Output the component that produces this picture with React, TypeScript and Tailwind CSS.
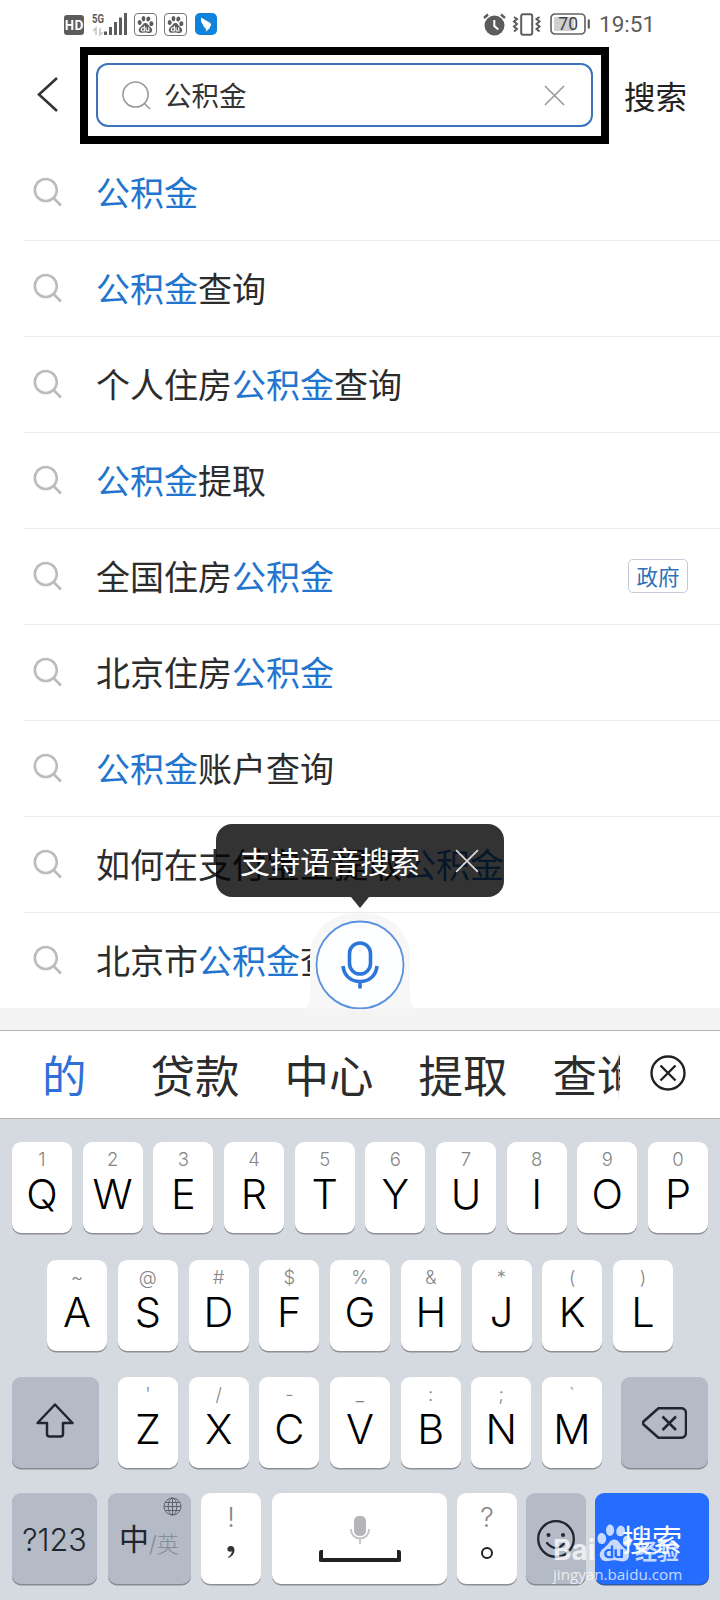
import type { ReactNode } from "react";
import clsx from "clsx";
import { SiBaidu } from "react-icons/si";

const KEYWORD = "公积金";

const suggestions: { text: string; tag?: string }[] = [
  { text: "公积金" },
  { text: "公积金查询" },
  { text: "个人住房公积金查询" },
  { text: "公积金提取" },
  { text: "全国住房公积金", tag: "政府" },
  { text: "北京住房公积金" },
  { text: "公积金账户查询" },
  { text: "如何在支付宝上提取公积金" },
  { text: "北京市公积金查询" },
];

const topRow = ["Q1", "W2", "E3", "R4", "T5", "Y6", "U7", "I8", "O9", "P0"];
const middleRow = ["A~", "S@", "D#", "F$", "G%", "H&", "J*", "K(", "L)"];
const bottomRow = ["Z'", "X/", "C-", "V_", "B:", "N;", "M`"];

function SearchIcon({ className, thin }: { className: string; thin?: boolean }) {
  return (
    <svg
      className={className}
      viewBox="0 0 30 30"
      fill="none"
      stroke="currentColor"
      strokeWidth={thin ? 1.6 : 2.6}
    >
      <circle cx={thin ? 14 : 12.8} cy={thin ? 14 : 13} r={thin ? 13 : 11} />
      <path d={thin ? "M23 23l6 6" : "M20.5 21l7.500 7.500"} />
    </svg>
  );
}

function Cross({ className }: { className: string }) {
  return (
    <svg className={className} viewBox="0 0 22 22" fill="none" stroke="currentColor" strokeWidth="1.6">
      <path d="M1 1l20 20M21 1L1 21" />
    </svg>
  );
}

function StatusBar() {
  return (
    <div className="flex h-[47px] items-center pl-16 pr-[66px] text-[#5c5c5c]">
      <div className="mt-[2px] flex h-5 w-5 items-center justify-center rounded-[3px] bg-[#5c5c5c] text-[13px] font-bold text-white">
        HD
      </div>
      <svg className="ml-[7px] mt-px h-6 w-9 overflow-visible" viewBox="0 0 36 24" fill="currentColor">
        <text x="1" y="10.500" fontSize="13" fontWeight="700" textLength="12" lengthAdjust="spacingAndGlyphs" fontFamily="Roboto">
          5G
        </text>
        <path d="M5 23v-7l-3 3M9 16v7l3-3" fill="none" stroke="#c4c4c4" strokeWidth="1.500" />
        <path d="M13 19.500h3V23h-3zM18 15h3v8h-3zM23 10h3v13h-3zM28 5.500h3V23h-3zM33 1h3v22h-3z" />
      </svg>
      {[0, 1].map((i) => (
        <div
          key={i}
          className="ml-[7px] mt-px flex size-[23px] items-center justify-center rounded border border-[#777777]"
        >
          <SiBaidu className="size-[17px]" />
        </div>
      ))}
      <svg className="ml-2 mt-px size-[22px]" viewBox="0 0 22 22">
        <rect width="22" height="22" rx="5" fill="#0f82dc" />
        <path d="M6 4.500l8.500 5c1.700 1 2 2 1.300 3.300l-1.300 2h.8l-4.600 4 .4-3-1.800-.8.600-.8-2.100-1.500.7-.5C6.600 10.500 5.500 8 6 4.500z" fill="#fff" />
      </svg>

      <svg className="ml-auto mt-px size-[23px]" viewBox="0 0 23 23" fill="none" stroke="currentColor">
        <circle cx="11.500" cy="12.500" r="10" fill="currentColor" stroke="none" />
        <path d="M1 5l4-3.500M22 5l-4-3.500" strokeWidth="2.400" />
        <path d="M11.300 7v6l4 3.500" stroke="#fff" strokeWidth="2" />
      </svg>
      <svg className="ml-[6px] mt-px h-[23px] w-[30px]" viewBox="0 0 30 23" fill="none" stroke="currentColor">
        <rect x="9.200" y="1.200" width="11" height="20.500" rx="2" strokeWidth="2" />
        <path d="M2 4l3 2-3 2.500L5 11l-3 2.500L5 16l-3 2.500M27.500 4l-3 2 3 2.500-3 2.500 3 2.500-3 2.500 3 2.500" strokeWidth="2" />
      </svg>
      <svg className="ml-2 mt-px h-[22px] w-[41px]" viewBox="0 0 41 22" fill="none">
        <rect x="1" y="1" width="34" height="20" rx="4" stroke="#666" strokeWidth="1.700" />
        <rect x="4" y="4" width="20" height="14" rx="1" fill="#cfcfcf" />
        <path d="M38.800 6.500v9" stroke="#5c5c5c" strokeWidth="2.200" />
        <text x="18.200" y="16.800" textAnchor="middle" fontSize="17.500" fontFamily="Roboto" fill="#444">
          70
        </text>
      </svg>
      <span className="ml-2 mt-[2px] w-[55px] font-[Roboto] text-[22.500px] leading-none">19:51</span>
    </div>
  );
}

function SearchHeader() {
  return (
    <header className="flex h-[98px] items-center">
      <svg className="-mt-1 ml-[37px] h-[35px] w-[21px]" viewBox="0 0 21 35" fill="none" stroke="#333" strokeWidth="2.600">
        <path d="M20 1L2 17.500 20 34" />
      </svg>
      <div className="-mt-px ml-[22px] h-[97px] w-[529px] border-8 border-black px-2 py-[8px]">
        <div className="flex h-16 items-center rounded-xl border-2 border-[#3b74bd] pl-6 pr-[26px]">
          <SearchIcon className="size-[29px] text-[#999999]" thin />
          <span className="ml-[13px] text-[27.500px] leading-none text-[#333333]">{KEYWORD}</span>
          <Cross className="ml-auto size-[21px] text-[#999999]" />
        </div>
      </div>
      <span className="-mt-px ml-[15px] text-[31.500px] leading-none text-[#222222]">搜索</span>
    </header>
  );
}

function SuggestionRow({ text, tag }: { text: string; tag?: string }) {
  const [before, after] = text.split(KEYWORD);
  return (
    <li className="ml-6 flex h-24 items-center border-b border-[#ebebeb] pb-[2px] pr-8 last:h-[95px] last:border-b-0">
      <SearchIcon className="ml-[9px] size-[30px] text-[#bcbcbc]" />
      <span className="ml-[33px] whitespace-nowrap text-[34px] leading-none text-[#2c2c2c]">
        {before}
        <span className="text-[#2275cf]">{KEYWORD}</span>
        {after}
      </span>
      {tag && (
        <span className="ml-auto flex h-[34px] w-[60px] items-center justify-center rounded-[5px] border border-[#c3cbd8] text-[21.500px] leading-none text-[#2f72b8]">
          {tag}
        </span>
      )}
    </li>
  );
}

function VoicePrompt() {
  return (
    <>
      <svg className="absolute left-[304px] top-[908px] h-[101px] w-28" viewBox="0 0 112 101">
        <path d="M0 101C7 99 6 87 6 64V44C10 18 30 5 56 5s46 13 50 39v20c0 23 0 35 6 37z" fill="#f7f7f7" />
        <circle cx="56" cy="57" r="43.500" fill="#fdfeff" stroke="#5b92de" strokeWidth="1.800" />
        <g fill="none" stroke="#2c76d9" strokeWidth="3.600">
          <rect x="45.500" y="35" width="21" height="31" rx="10.500" />
          <path d="M39 58c1 10 8 15.500 17 15.500S72 68 73 58M56 73v7.500" />
        </g>
      </svg>
      <div className="absolute left-[216px] top-[824px] flex h-[73px] w-72 items-center rounded-2xl bg-black/80 pl-6 pr-[25px]">
        <span className="-mt-[2px] text-[30px] leading-none text-white">支持语音搜索</span>
        <Cross className="ml-auto size-6 text-[#d8d8d8]" />
        <svg className="absolute left-[135px] top-[73px] h-[11px] w-[18px]" viewBox="0 0 18 11">
          <path d="M0 0h18l-9 11z" fill="#333" />
        </svg>
      </div>
    </>
  );
}

function CandidateBar() {
  return (
    <div className="flex h-[89px] items-center border-y border-[#b4b4b4] bg-white">
      <div className="flex w-[620px] overflow-hidden whitespace-nowrap pb-px pl-[42px] text-[44.500px] leading-[80px] text-[#2c2c2c]">
        <span className="mr-16 text-[#2f6fd8]">的</span>
        {["贷款", "中心", "提取", "查询"].map((word) => (
          <span key={word} className="mr-[45px]">
            {word}
          </span>
        ))}
      </div>
      <div className="-ml-[2px] h-[52px] w-px bg-linear-to-b from-transparent via-[#999999] to-transparent" />
      <svg className="-mt-[3px] ml-[31px] size-9" viewBox="0 0 36 36" fill="none" stroke="#222" strokeWidth="2.400">
        <circle cx="18" cy="18" r="16.500" />
        <path d="M10.500 10.500l15 15M25.500 10.500l-15 15" />
      </svg>
    </div>
  );
}

function Key({ className, dark, children }: { className: string; dark?: boolean; children: ReactNode }) {
  return (
    <div
      className={clsx(
        "relative h-[91px] shrink-0 rounded-[9px]",
        dark ? "bg-[#b4bac6] shadow-[0_1.500px_0_#858992]" : "bg-white shadow-[0_1.500px_0_#8d8f94]",
        className,
      )}
    >
      {children}
    </div>
  );
}

function LetterKey({ label }: { label: string }) {
  return (
    <Key className="flex w-[60px] flex-col items-center pt-[5px]">
      <span className="text-[18.500px] font-light leading-6 text-[#858585]">{label[1]}</span>
      <span className="mt-px text-[41.500px] font-light leading-[45px] text-black">{label[0]}</span>
    </Key>
  );
}

function Keyboard() {
  return (
    <div className="flex h-[481px] flex-col bg-[#d5d9e0] px-3 pt-[23px] font-[Inter,'Noto_Sans_CJK_SC',sans-serif]">
      <div className="flex justify-between">
        {topRow.map((k) => (
          <LetterKey key={k} label={k} />
        ))}
      </div>
      <div className="mt-[27px] flex justify-between px-[35px]">
        {middleRow.map((k) => (
          <LetterKey key={k} label={k} />
        ))}
      </div>
      <div className="mt-[26px] flex justify-between">
        <Key dark className="flex w-[87px] items-center justify-center">
          <svg className="-ml-px -mt-1 h-[35px] w-[38px]" viewBox="0 0 38 35" fill="none" stroke="#20262e" strokeWidth="2.500" strokeLinejoin="round">
            <path d="M19 1.500L36.500 20H27v11a2.500 2.500 0 0 1-2.500 2.500h-11A2.500 2.500 0 0 1 11 31V20H1.500z" />
          </svg>
        </Key>
        <div className="flex w-[484px] justify-between">
          {bottomRow.map((k) => (
            <LetterKey key={k} label={k} />
          ))}
        </div>
        <Key dark className="flex w-[87px] items-center justify-center">
          <svg className="h-8 w-[45px]" viewBox="0 0 45 32" fill="none" stroke="#20262e" strokeWidth="2.500" strokeLinejoin="round">
            <path d="M16.500 1.200H39a5 5 0 0 1 5 5v19.600a5 5 0 0 1-5 5H16.500L1.500 17.500q-1-1.500 0-3z" />
            <path d="M20.500 9.500l13.500 13.500M34 9.500L20.500 23" />
          </svg>
        </Key>
      </div>
      <div className="mt-[25px] flex">
        <Key dark className="flex w-[85px] items-center justify-center pt-[2px] text-[30.500px] font-[350] text-[#20262e]">
          ?123
        </Key>
        <Key dark className="ml-[11px] flex w-[83px] items-end whitespace-nowrap pb-[27px] pl-[11px] text-[#20262e]">
          <span className="text-[30px] leading-9">中</span>
          <span className="-mb-px text-[22px] font-light leading-7 text-[#858c9a]">/英</span>
          <svg className="absolute right-[9px] top-1 size-[19px]" viewBox="0 0 19 19" fill="none" stroke="#5e636d" strokeWidth="1">
            <circle cx="9.500" cy="9.500" r="8.500" />
            <ellipse cx="9.500" cy="9.500" rx="4.300" ry="8.500" />
            <path d="M9.500 1v17M1 9.500h17M2.200 5.500h14.600M2.200 13.500h14.600" />
          </svg>
        </Key>
        <Key className="ml-[10px] flex w-[60px] flex-col items-center pt-[11px]">
          <span className="text-[27px] font-light leading-7 text-[#858585]">!</span>
          <svg className="mt-[14px] h-[14px] w-2" viewBox="0 0 9 16" fill="#333">
            <path d="M4.200 0C1.500 0 .3 1.700.3 3.500s1.400 3 3.200 3c.8 0 1.500-.1 2-.5C5.300 9 3.800 11 1 12.600l.5 1.200C6 12 8.500 8.500 8.500 4.700 8.500 1.800 7 0 4.200 0z" />
          </svg>
        </Key>
        <Key className="ml-[11px] flex w-[175px] flex-col items-center pt-[23px]">
          <svg className="h-7 w-5" viewBox="0 0 20 28">
            <rect x="4" width="12" height="20" rx="5" fill="#b4b4ba" />
            <path d="M1 13c0 6 4 9.500 9 9.500s9-3.500 9-9.500M10 22.500V28" fill="none" stroke="#c0c0c5" strokeWidth="1.800" />
          </svg>
          <div className="mt-[6px] h-3 w-[82px] rounded-xs border-x-4 border-b-4 border-[#222222]" />
        </Key>
        <Key className="ml-[10px] flex w-[60px] flex-col items-center pt-[11px]">
          <span className="text-[27px] font-light leading-7 text-[#858585]">?</span>
          <span className="mt-[15px] size-3 rounded-full border-2 border-[#222222]" />
        </Key>
        <Key dark className="ml-[9px] flex w-[60px] items-center justify-center">
          <svg className="size-[38px]" viewBox="0 0 38 38" fill="none" stroke="#20262e" strokeWidth="2.300" strokeLinecap="round">
            <circle cx="19" cy="19" r="17.800" />
            <circle cx="11.500" cy="15" r="2" fill="#20262e" stroke="none" />
            <circle cx="26" cy="15" r="2" fill="#20262e" stroke="none" />
            <path d="M10 23q9 10 17.500 0" />
          </svg>
        </Key>
        <div className="ml-[9px] flex h-[91px] w-[114px] shrink-0 items-center justify-center rounded-[9px] bg-[#256dff] pt-[3px] text-[30px] text-white shadow-[0_1.500px_0_#34589f]">
          搜索
        </div>
      </div>
    </div>
  );
}

function Watermark() {
  return (
    <div className="absolute left-[553px] top-[1521px] w-[132px] text-white/75">
      <div className="flex h-[43px] items-end">
        <span className="w-[43px] font-[Inter] text-[28px] font-bold leading-[28px]">Bai</span>
        <SiBaidu className="mb-px h-[40px] w-[37px]" />
        <span className="ml-[2px] text-[22px] font-bold leading-[29px]">经验</span>
      </div>
      <div className="font-['Open_Sans'] text-[15.200px] leading-[20px]">jingyan.baidu.com</div>
    </div>
  );
}

export default function App() {
  return (
    <div className="relative h-[1600px] w-[720px] overflow-hidden bg-white font-['Noto_Sans_CJK_SC',sans-serif]">
      <StatusBar />
      <SearchHeader />
      <ul>
        {suggestions.map((s) => (
          <SuggestionRow key={s.text} {...s} />
        ))}
      </ul>
      <div className="h-[22px] bg-[#f4f4f4]" />
      <CandidateBar />
      <Keyboard />
      <VoicePrompt />
      <Watermark />
    </div>
  );
}
